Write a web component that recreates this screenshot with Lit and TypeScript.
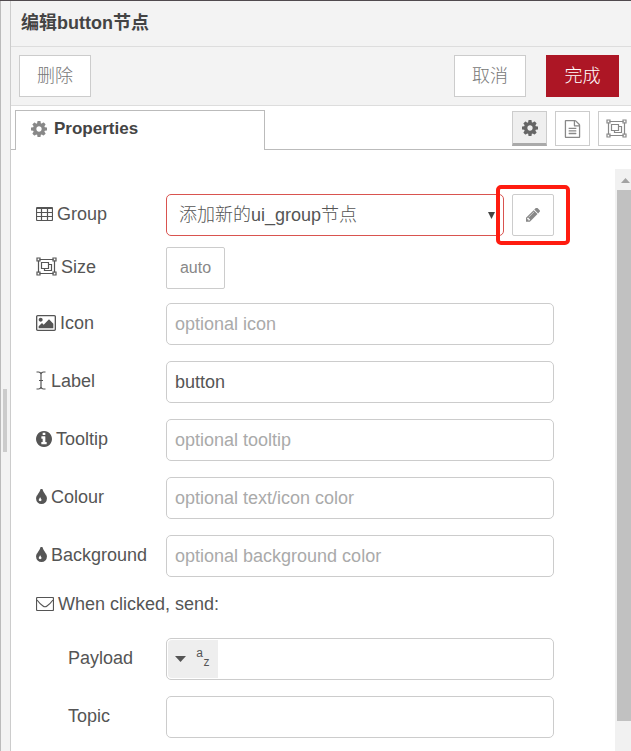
import { LitElement, html, svg, css } from "lit";
import { customElement, property } from "lit/decorators.js";

const groupShape = svg`
  <path d="M3.5 2.5h14M3.5 16.5h14M2.5 3.5v12M18.5 3.5v12" />
  <path d="M1 1h3v3h-3zM17 1h3v3h-3zM1 15h3v3h-3zM17 15h3v3h-3z" />
  <path d="M5.5 5.5h7v6h-7zM12.5 7.5h3v6h-7v-2" />`;

const icons: Record<string, { w: number; h: number; box: string; line?: boolean; body: unknown }> = {
  cog: {
    w: 16, h: 16, box: "128 128 1536 1536",
    body: svg`<path d="M1152 896q0-106-75-181t-181-75-181 75-75 181 75 181 181 75 181-75 75-181zm512-109v222q0 12-8 23t-20 13l-185 28q-19 54-39 91 35 50 107 138 10 12 10 25t-9 23q-27 37-99 108t-94 71q-12 0-26-9l-138-108q-44 23-91 38-16 136-29 186-7 28-36 28h-222q-14 0-24.5-8.5t-11.5-21.5l-28-184q-49-16-90-37l-141 107q-10 9-25 9-14 0-25-11-126-114-165-168-7-10-7-23 0-12 8-23 15-21 51-66.5t54-70.5q-27-50-41-99l-183-27q-13-2-21-12.5t-8-23.5v-222q0-12 8-23t19-13l186-28q14-46 39-92-40-57-107-138-10-12-10-24 0-10 9-23 26-36 98.5-107.5t94.5-71.5q13 0 26 10l138 107q44-23 91-38 16-136 29-186 7-28 36-28h222q14 0 24.5 8.5t11.5 21.5l28 184q49 16 90 37l142-107q9-9 24-9 13 0 25 10 129 119 165 170 7 8 7 22 0 12-8 23-15 21-51 66.5t-54 70.5q26 50 41 98l183 28q13 2 21 12.5t8 23.5z"/>`,
  },
  file: {
    w: 17, h: 18, box: "128 0 1536 1792",
    body: svg`<path d="M1596 380q28 28 48 76t20 88v1152q0 40-28 68t-68 28h-1344q-40 0-68-28t-28-68v-1600q0-40 28-68t68-28h896q40 0 88 20t76 48zm-444-244v376h376q-10-29-22-41l-313-313q-12-12-41-22zm384 1528v-1024h-416q-40 0-68-28t-28-68v-416h-768v1536h1280zm-1024-864q0-14 9-23t23-9h704q14 0 23 9t9 23v64q0 14-9 23t-23 9h-704q-14 0-23-9t-9-23v-64zm736 224q14 0 23 9t9 23v64q0 14-9 23t-23 9h-704q-14 0-23-9t-9-23v-64q0-14 9-23t23-9h704zm0 256q14 0 23 9t9 23v64q0 14-9 23t-23 9h-704q-14 0-23-9t-9-23v-64q0-14 9-23t23-9h704z"/>`,
  },
  group: { w: 21, h: 19, box: "0 0 21 19", line: true, body: groupShape },
  table: {
    w: 17, h: 14, box: "0 0 17 14", line: true,
    body: svg`<rect x=".5" y=".5" width="16" height="13" rx="1"/><path d="M1 1.5h15M1 5.5h15M1 9.5h15M5.5 1v12M11.5 1v12"/>`,
  },
  picture: {
    w: 20, h: 16, box: "-64 128 1920 1536",
    body: svg`<path d="M576 576q0 80-56 136t-136 56-136-56-56-136 56-136 136-56 136 56 56 136zm1024 384v448h-1408v-192l320-320 160 160 512-512zm96-704h-1600q-13 0-22.5 9.5t-9.5 22.5v1216q0 13 9.5 22.5t22.5 9.5h1600q13 0 22.5-9.5t9.5-22.5v-1216q0-13-9.5-22.5t-22.5-9.5zm160 32v1216q0 66-47 113t-113 47h-1600q-66 0-113-47t-47-113v-1216q0-66 47-113t113-47h1600q66 0 113 47t47 113z"/>`,
  },
  cursor: {
    w: 11, h: 19, box: "0 0 11 19", line: true,
    body: svg`<path d="M.5 1h2q2 0 2.5 2q.5-2 2.5-2h2M.5 18h2q2 0 2.5-2q.5 2 2.5 2h2M5 2.5v14M3 9.5h4"/>`,
  },
  info: {
    w: 16, h: 16, box: "128 128 1536 1536",
    body: svg`<path d="M1152 1376v-160q0-14-9-23t-23-9h-96v-512q0-14-9-23t-23-9h-320q-14 0-23 9t-9 23v160q0 14 9 23t23 9h96v320h-96q-14 0-23 9t-9 23v160q0 14 9 23t23 9h448q14 0 23-9t9-23zm-128-896v-160q0-14-9-23t-23-9h-192q-14 0-23 9t-9 23v160q0 14 9 23t23 9h192q14 0 23-9t9-23zm640 416q0 209-103 385.5t-279.5 279.5-385.5 103-385.5-103-279.5-279.5-103-385.5 103-385.5 279.5-279.5 385.5-103 385.5 103 279.5 279.5 103 385.5z"/>`,
  },
  tint: {
    w: 11, h: 15, box: "384 128 1024 1408",
    body: svg`<path d="M896 1152q0-36-20-69-1-1-15.5-22.5t-25.5-38-25-44-21-50.5q-4-16-21-16t-21 16q-7 23-21 50.5t-25 44-25.5 38-15.5 22.5q-20 33-20 69 0 53 37.5 90.5t90.5 37.5 90.5-37.5 37.5-90.5zm512-128q0 212-150 362t-362 150-362-150-150-362q0-145 81-275 6-9 62.5-90.5t101-151 99.5-178 83-201.5q9-30 34-47t51-17 51.5 17 33.5 47q28 93 83 201.5t99.5 178 101 151 62.5 90.5q81 127 81 275z"/>`,
  },
  envelope: {
    w: 18, h: 14, box: "0 0 18 14", line: true,
    body: svg`<rect x=".5" y=".5" width="17" height="13" rx="1"/><path d="M1 3q3 4 6 6q2 1.5 4 0q3-2 6-6"/>`,
  },
  pencil: {
    w: 14, h: 14, box: "128 219 1515 1445",
    body: svg`<path d="M491 1536l91-91-235-235-91 91v107h128v128h107zm523-928q0-22-22-22-10 0-17 7l-542 542q-7 7-7 17 0 22 22 22 10 0 17-7l542-542q7-7 7-17zm-54-192l416 416-832 832h-416v-416zm683 96q0 53-37 90l-166 166-416-416 166-165q36-38 90-38 53 0 91 38l235 234q37 39 37 91z"/>`,
  },
  caret: { w: 11, h: 6, box: "0 0 11 6", body: svg`<path d="M0 0h11l-5.5 6z"/>` },
  arrow: { w: 8, h: 8, box: "0 0 8 8", body: svg`<path d="M1 1h7l-3.5 7z"/>` },
  up: { w: 9, h: 5, box: "0 0 9 5", body: svg`<path d="M0 5h9l-4.5-5z"/>` },
};

@customElement("fa-icon")
class FaIcon extends LitElement {
  @property() name = "cog";

  static styles = css`
    :host { display: inline-flex; flex: none; }
    .glyph { display: block; fill: currentColor; }
    .line { fill: none; stroke: currentColor; stroke-width: 1.2; }
  `;

  render() {
    const i = icons[this.name];
    return html`<svg class=${i.line ? "glyph line" : "glyph"} width=${i.w} height=${i.h} viewBox=${i.box} aria-hidden="true">${i.body}</svg>`;
  }
}

const fields = [
  { id: "icon", icon: "picture", label: "Icon", hint: "optional icon", value: "" },
  { id: "label", icon: "cursor", label: "Label", hint: "", value: "button" },
  { id: "tooltip", icon: "info", label: "Tooltip", hint: "optional tooltip", value: "" },
  { id: "colour", icon: "tint", label: "Colour", hint: "optional text/icon color", value: "" },
  { id: "background", icon: "tint", label: "Background", hint: "optional background color", value: "" },
];

@customElement("app-root")
class AppRoot extends LitElement {
  static styles = css`
    * { box-sizing: border-box; }
    :host {
      display: flex;
      min-height: 100vh;
      overflow: hidden;
      border-top: 1px solid #504a4e;
      background: #fff;
      color: #555;
      font: 18px/22px "Liberation Sans", "Noto Sans CJK SC", sans-serif;
    }
    button, input, select { font: inherit; color: inherit; margin: 0; }
    button { padding: 0; cursor: pointer; }

    .splitter {
      flex: none;
      width: 11px;
      display: flex;
      align-items: center;
      padding: 88px 0 0 2px;
      background: #f3f3f3;
      border-left: 1px solid #bbb;
      border-right: 1px solid #ccc;
    }
    .grip { width: 4px; height: 63px; background: #ccc; }

    .tray { flex: 1; min-width: 0; display: flex; flex-direction: column; }
    .title {
      height: 46px;
      margin: 0;
      padding: 11px 10px;
      font-size: 18px;
      font-weight: bold;
      color: #444;
      background: #f3f3f3;
      border-bottom: 1px solid #ddd;
    }
    .toolbar {
      display: flex;
      gap: 20px;
      height: 59px;
      padding: 8px 12px 8px 8px;
      background: #f3f3f3;
      border-bottom: 1px solid #ddd;
    }
    .action {
      width: 72px;
      height: 42px;
      font-weight: 300;
      color: #777;
      background: #fff;
      border: 1px solid #ccc;
    }
    .first { margin-right: auto; }
    .primary { width: 73px; color: #fff; background: #ad1625; border-color: #ad1625; }

    .tabs {
      display: flex;
      height: 44px;
      padding: 4px 0 0 4px;
      overflow: hidden;
      box-shadow: inset 0 -1px #bbb;
    }
    .tab {
      display: flex;
      align-items: center;
      gap: 7px;
      width: 250px;
      padding: 0 15px 3px;
      font-size: 17px;
      font-weight: bold;
      color: #444;
      background: #fff;
      border: 1px solid #bbb;
      border-bottom: 0;
    }
    .tab fa-icon { color: #888; }
    .modes { display: flex; gap: 8px; margin: 1px -3px 0 auto; }
    .mode {
      display: flex;
      align-items: center;
      justify-content: center;
      width: 35px;
      height: 35px;
      color: #888;
      background: #fff;
      border: 1px solid #ccc;
    }
    .mode:last-child { width: 36px; }
    .chosen { color: #666; background: #efefef; border-bottom: 3px solid #aaa; }

    .body { flex: 1; display: flex; }
    .form {
      flex: 1;
      min-width: 0;
      display: flex;
      flex-direction: column;
      gap: 16px;
      padding: 44px 61px 13px 25px;
    }
    .row { display: grid; grid-template-columns: 130px minmax(0, 1fr); align-items: center; }
    .group { margin-bottom: -5px; }
    .size { margin-bottom: -2px; }
    .name { display: flex; align-items: center; gap: 4px; padding-bottom: 3px; }
    .indent { padding-left: 32px; }
    .field {
      width: 100%;
      height: 42px;
      padding: 0 8px;
      background: #fff;
      border: 1px solid #ccc;
      border-radius: 5px;
      outline: 0;
    }
    .field::placeholder { color: #aaa; opacity: 1; }
    .pick { display: flex; gap: 8px; }
    .choice { position: relative; flex: 1; min-width: 0; }
    .choice fa-icon { position: absolute; right: 9px; top: 17px; color: #444; pointer-events: none; }
    .select { appearance: none; padding: 0 24px 0 12px; border-color: #d9534f; font-weight: 300; }
    .marked { position: relative; }
    .marker {
      position: absolute;
      inset: -9px -16px -9px -16px;
      border: 4px solid #ff1c10;
      border-radius: 5px;
      pointer-events: none;
    }
    .edit, .auto {
      display: flex;
      align-items: center;
      justify-content: center;
      width: 42px;
      height: 42px;
      color: #888;
      background: #fff;
      border: 1px solid #ccc;
      border-radius: 2px;
    }
    .auto { width: 59px; font-size: 16px; }
    .send { margin: 0; font-size: 18px; font-weight: normal; padding-bottom: 7px; }

    .typed { display: flex; padding: 1px; }
    .type {
      flex: none;
      display: flex;
      align-items: center;
      gap: 10px;
      width: 50px;
      padding: 0 7px;
      background: #eee;
      border: 0;
      border-radius: 4px 0 0 4px;
    }
    .az { display: grid; grid-template-columns: 7px 7px; font-size: 12px; line-height: 9px; padding-bottom: 2px; }
    .z { grid-area: 2 / 2; }
    .bare { flex: 1; min-width: 0; border: 0; background: none; outline: 0; }

    .scroll {
      flex: none;
      display: flex;
      flex-direction: column;
      align-items: flex-end;
      width: 16px;
      margin-top: 19px;
      padding-bottom: 31px;
      background: #f1f1f1;
    }
    .scroll fa-icon { color: #a3a3a3; padding: 9px 1px 7px; }
    .thumb { flex: 1; width: 14px; background: #c1c1c1; }
  `;

  render() {
    return html`
      <div class="splitter"><div class="grip"></div></div>
      <main class="tray">
        <h1 class="title">编辑button节点</h1>
        <div class="toolbar">
          <button class="action first">删除</button>
          <button class="action">取消</button>
          <button class="action primary">完成</button>
        </div>
        <div class="tabs">
          <button class="tab"><fa-icon name="cog"></fa-icon>Properties</button>
          <div class="modes">
            <button class="mode chosen" aria-label="Properties"><fa-icon name="cog"></fa-icon></button>
            <button class="mode" aria-label="Description"><fa-icon name="file"></fa-icon></button>
            <button class="mode" aria-label="Appearance"><fa-icon name="group"></fa-icon></button>
          </div>
        </div>
        <div class="body">
          <form class="form" @submit=${(e: Event) => e.preventDefault()}>
            <div class="row group">
              <label class="name" for="group"><fa-icon name="table"></fa-icon>Group</label>
              <div class="pick">
                <div class="choice">
                  <select class="field select" id="group"><option>添加新的ui_group节点</option></select>
                  <fa-icon name="arrow"></fa-icon>
                </div>
                <div class="marked">
                  <button type="button" class="edit" aria-label="Edit group"><fa-icon name="pencil"></fa-icon></button>
                  <div class="marker"></div>
                </div>
              </div>
            </div>
            <div class="row size">
              <label class="name" for="size"><fa-icon name="group"></fa-icon>Size</label>
              <button type="button" class="auto" id="size">auto</button>
            </div>
            ${fields.map((f) => html`
              <div class="row">
                <label class="name" for=${f.id}><fa-icon name=${f.icon}></fa-icon>${f.label}</label>
                <input class="field" type="text" id=${f.id} placeholder=${f.hint} .value=${f.value} />
              </div>`)}
            <h2 class="name send"><fa-icon name="envelope"></fa-icon>When clicked, send:</h2>
            <div class="row">
              <label class="name indent" for="payload">Payload</label>
              <div class="field typed">
                <button type="button" class="type" aria-label="Payload type">
                  <fa-icon name="caret"></fa-icon>
                  <span class="az"><span>a</span><span class="z">z</span></span>
                </button>
                <input class="bare" type="text" id="payload" />
              </div>
            </div>
            <div class="row">
              <label class="name indent" for="topic">Topic</label>
              <input class="field" type="text" id="topic" />
            </div>
          </form>
          <div class="scroll"><fa-icon name="up"></fa-icon><div class="thumb"></div></div>
        </div>
      </main>
    `;
  }
}
